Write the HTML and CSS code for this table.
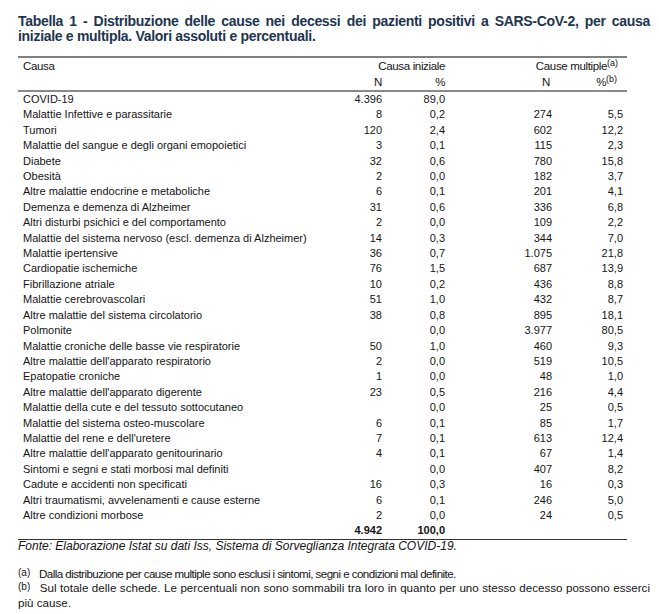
FILE: index.html
```html
<!DOCTYPE html>
<html lang="it">
<head>
<meta charset="utf-8">
<title>Tabella 1</title>
<link rel="stylesheet" href="styles.css">
</head>
<body>
<div class="page">
  <h1 class="title">Tabella 1 - Distribuzione delle cause nei decessi dei pazienti positivi a SARS-CoV-2, per causa iniziale e multipla. Valori assoluti e percentuali.</h1>
  <table class="data">
    <colgroup>
      <col class="c-name"><col class="c-n1"><col class="c-p1"><col class="c-n2"><col class="c-p2">
    </colgroup>
    <thead>
      <tr class="h1">
        <th class="name">Causa</th>
        <th colspan="2" class="grp1">Causa iniziale</th>
        <th colspan="2" class="grp2">Cause multiple<sup>(a)</sup></th>
      </tr>
      <tr class="h2">
        <th></th>
        <th class="num">N</th>
        <th class="num">%</th>
        <th class="num hn2">N</th>
        <th class="num hp2">%<sup>(b)</sup></th>
      </tr>
    </thead>
    <tbody>
      <tr><td class="name">COVID-19</td><td>4.396</td><td>89,0</td><td></td><td></td></tr>
      <tr><td class="name">Malattie Infettive e parassitarie</td><td>8</td><td>0,2</td><td>274</td><td>5,5</td></tr>
      <tr><td class="name">Tumori</td><td>120</td><td>2,4</td><td>602</td><td>12,2</td></tr>
      <tr><td class="name">Malattie del sangue e degli organi emopoietici</td><td>3</td><td>0,1</td><td>115</td><td>2,3</td></tr>
      <tr><td class="name">Diabete</td><td>32</td><td>0,6</td><td>780</td><td>15,8</td></tr>
      <tr><td class="name">Obesità</td><td>2</td><td>0,0</td><td>182</td><td>3,7</td></tr>
      <tr><td class="name">Altre malattie endocrine e metaboliche</td><td>6</td><td>0,1</td><td>201</td><td>4,1</td></tr>
      <tr><td class="name">Demenza e demenza di Alzheimer</td><td>31</td><td>0,6</td><td>336</td><td>6,8</td></tr>
      <tr><td class="name">Altri disturbi psichici e del comportamento</td><td>2</td><td>0,0</td><td>109</td><td>2,2</td></tr>
      <tr><td class="name">Malattie del sistema nervoso (escl. demenza di Alzheimer)</td><td>14</td><td>0,3</td><td>344</td><td>7,0</td></tr>
      <tr><td class="name">Malattie ipertensive</td><td>36</td><td>0,7</td><td>1.075</td><td>21,8</td></tr>
      <tr><td class="name">Cardiopatie ischemiche</td><td>76</td><td>1,5</td><td>687</td><td>13,9</td></tr>
      <tr><td class="name">Fibrillazione atriale</td><td>10</td><td>0,2</td><td>436</td><td>8,8</td></tr>
      <tr><td class="name">Malattie cerebrovascolari</td><td>51</td><td>1,0</td><td>432</td><td>8,7</td></tr>
      <tr><td class="name">Altre malattie del sistema circolatorio</td><td>38</td><td>0,8</td><td>895</td><td>18,1</td></tr>
      <tr><td class="name">Polmonite</td><td></td><td>0,0</td><td>3.977</td><td>80,5</td></tr>
      <tr><td class="name">Malattie croniche delle basse vie respiratorie</td><td>50</td><td>1,0</td><td>460</td><td>9,3</td></tr>
      <tr><td class="name">Altre malattie dell'apparato respiratorio</td><td>2</td><td>0,0</td><td>519</td><td>10,5</td></tr>
      <tr><td class="name">Epatopatie croniche</td><td>1</td><td>0,0</td><td>48</td><td>1,0</td></tr>
      <tr><td class="name">Altre malattie dell'apparato digerente</td><td>23</td><td>0,5</td><td>216</td><td>4,4</td></tr>
      <tr><td class="name">Malattie della cute e del tessuto sottocutaneo</td><td></td><td>0,0</td><td>25</td><td>0,5</td></tr>
      <tr><td class="name">Malattie del sistema osteo-muscolare</td><td>6</td><td>0,1</td><td>85</td><td>1,7</td></tr>
      <tr><td class="name">Malattie del rene e dell'uretere</td><td>7</td><td>0,1</td><td>613</td><td>12,4</td></tr>
      <tr><td class="name">Altre malattie dell'apparato genitourinario</td><td>4</td><td>0,1</td><td>67</td><td>1,4</td></tr>
      <tr><td class="name">Sintomi e segni e stati morbosi mal definiti</td><td></td><td>0,0</td><td>407</td><td>8,2</td></tr>
      <tr><td class="name">Cadute e accidenti non specificati</td><td>16</td><td>0,3</td><td>16</td><td>0,3</td></tr>
      <tr><td class="name">Altri traumatismi, avvelenamenti e cause esterne</td><td>6</td><td>0,1</td><td>246</td><td>5,0</td></tr>
      <tr><td class="name">Altre condizioni morbose</td><td>2</td><td>0,0</td><td>24</td><td>0,5</td></tr>
      <tr class="total"><td class="name"></td><td>4.942</td><td>100,0</td><td></td><td></td></tr>
    </tbody>
  </table>
  <p class="source">Fonte: Elaborazione Istat su dati Iss, Sistema di Sorveglianza Integrata COVID-19.</p>
  <div class="notes">
    <p class="note-a"><sup>(a)</sup> Dalla distribuzione per cause multiple sono esclusi i sintomi, segni e condizioni mal definite.</p>
    <p class="note-b"><sup>(b)</sup> <span>Sul totale delle schede. Le percentuali non sono sommabili tra loro in quanto per uno stesso decesso possono esserci</span> <span>più cause.</span></p>
  </div>
</div>
</body>
</html>
```
FILE: styles.css
```css
html, body {
  margin: 0;
  padding: 0;
  background: #ffffff;
}
body {
  font-family: "Liberation Sans", Arial, sans-serif;
  color: #141414;
}
.page {
  padding: 14px 9px 0 18px;
  width: 632px;
}
.title {
  margin: 0;
  font-size: 14px;
  line-height: 15px;
  font-weight: bold;
  color: #1d3550;
  letter-spacing: -0.3px;
  text-align: justify;
}
.data {
  margin-top: 12px;
  width: 609px;
  border-collapse: collapse;
  table-layout: fixed;
  font-size: 11px;
  border-top: 2px solid #808080;
  border-bottom: 1px solid #333333;
}
.c-name { width: 312px; }
.c-n1 { width: 52px; }
.c-p1 { width: 63px; }
.c-n2 { width: 107px; }
.c-p2 { width: 75px; }
.data th {
  font-size: 11.5px;
  letter-spacing: -0.35px;
  font-weight: normal;
  padding: 0;
  text-align: right;
  vertical-align: middle;
}
.data th.name { text-align: left; padding-left: 5px; }
.data .h1 th { height: 17px; line-height: 17px; }
.data .h2 th { height: 15px; line-height: 15px; }
.data thead tr.h2 { border-bottom: 2px solid #8a8a8a; }
.grp2 { padding-right: 9px !important; }
.hn2 { padding-right: 2px !important; }
.hp2 { padding-right: 10px !important; }
.data sup {
  font-size: 9px;
  letter-spacing: 0;
  line-height: 0;
  vertical-align: 4px;
}
.data td {
  padding: 0;
  height: 15.4px;
  line-height: 15.4px;
  text-align: right;
  white-space: nowrap;
}
.data td.name { text-align: left; padding-left: 5px; }
.data td:last-child { padding-right: 4px; }
.data tr.total td { font-weight: bold; }
.source {
  margin: 0;
  font-size: 12px;
  line-height: 12px;
  font-style: italic;
}
.notes {
  margin-top: 15px;
  font-size: 11.6px;
  line-height: 14.5px;
  text-align: justify;
}
.notes p { margin: 0; }
.note-a { letter-spacing: -0.55px; }
.notes sup {
  font-size: 10px;
  letter-spacing: 0;
  line-height: 0;
  vertical-align: 2px;
  margin-right: 6px;
}
```
